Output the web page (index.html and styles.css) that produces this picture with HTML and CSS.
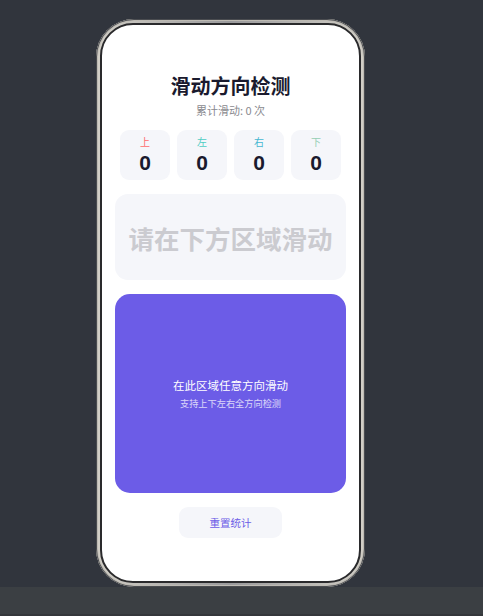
FILE: index.html
```html
<!DOCTYPE html>
<html>
<head>
  <title>滑动方向检测</title>
  <meta name="viewport" content="width=device-width, initial-scale=1.0" />
  <link rel="stylesheet" href="styles.css">
</head>
<body>
  <div class="stage">
    <div class="phone">
      <div class="screen">
        <h1 class="title">滑动方向检测</h1>
        <p class="subtitle">累计滑动: <span id="total">0</span> 次</p>

        <div class="stats">
          <div class="stat">
            <span class="stat-label up">上</span>
            <span class="stat-num" id="up">0</span>
          </div>
          <div class="stat">
            <span class="stat-label left">左</span>
            <span class="stat-num" id="left">0</span>
          </div>
          <div class="stat">
            <span class="stat-label right">右</span>
            <span class="stat-num" id="right">0</span>
          </div>
          <div class="stat">
            <span class="stat-label down">下</span>
            <span class="stat-num" id="down">0</span>
          </div>
        </div>

        <div class="display" id="display">请在下方区域滑动</div>

        <div class="swipe-area" id="swipeArea">
          <p class="swipe-main">在此区域任意方向滑动</p>
          <p class="swipe-sub">支持上下左右全方向检测</p>
        </div>

        <button class="reset" id="resetBtn">重置统计</button>
      </div>
    </div>
  </div>
  <div class="bottom-bar"></div>

  <script>
    const counts = { up: 0, down: 0, left: 0, right: 0 };
    const names = { up: "向上滑动", down: "向下滑动", left: "向左滑动", right: "向右滑动" };
    const area = document.getElementById("swipeArea");
    let startX = 0, startY = 0;

    function render() {
      for (const k in counts) document.getElementById(k).innerText = counts[k];
      document.getElementById("total").innerText =
        counts.up + counts.down + counts.left + counts.right;
    }

    area.addEventListener("pointerdown", function(e) {
      startX = e.clientX;
      startY = e.clientY;
    });

    area.addEventListener("pointerup", function(e) {
      const dx = e.clientX - startX;
      const dy = e.clientY - startY;
      if (Math.abs(dx) < 20 && Math.abs(dy) < 20) return;
      let dir;
      if (Math.abs(dx) > Math.abs(dy)) dir = dx > 0 ? "right" : "left";
      else dir = dy > 0 ? "down" : "up";
      counts[dir]++;
      document.getElementById("display").innerText = names[dir];
      render();
    });

    document.getElementById("resetBtn").addEventListener("click", function() {
      for (const k in counts) counts[k] = 0;
      document.getElementById("display").innerText = "请在下方区域滑动";
      render();
    });
  </script>
</body>
</html>
```

FILE: styles.css
```css
body {
  margin: 0;
  background-color: #31353d;
  font-family: "Noto Sans CJK SC", "Noto Sans", sans-serif;
}
.stage {
  height: 587px;
  padding: 19px 0 0 96px;
  box-sizing: border-box;
}
.phone {
  width: 269px;
  height: 568px;
  box-sizing: border-box;
  border-radius: 38px;
  padding: 4px;
  background: linear-gradient(90deg, #d2cfc7, #9a9a9c 50%, #d2cfc7);
  box-shadow: inset 0 0 0 1px #4a4c50, inset 0 0 0 2px #bdbab3;
}
.screen {
  height: 100%;
  box-sizing: border-box;
  border-radius: 33px;
  background-color: white;
  border: 2px solid #2a2a2c;
  padding: 47px 11px 0;
  display: flex;
  flex-direction: column;
  align-items: center;
}
.title {
  margin: 0;
  font-size: 20px;
  line-height: 28px;
  font-weight: bold;
  color: #1a1a2e;
}
.subtitle {
  margin: 2px 0 0;
  font-size: 11px;
  line-height: 16px;
  color: #8a8a8f;
}
.stats {
  margin-top: 12px;
  display: flex;
  gap: 7px;
}
.stat {
  width: 50px;
  height: 50px;
  box-sizing: border-box;
  padding-top: 5px;
  border-radius: 9px;
  background-color: #f5f6fa;
  display: flex;
  flex-direction: column;
  align-items: center;
}
.stat-label {
  font-size: 10px;
  line-height: 14px;
}
.stat-label.up { color: #ff6b6b; }
.stat-label.left { color: #4ecdc4; }
.stat-label.right { color: #45b7d1; }
.stat-label.down { color: #96ceb4; }
.stat-num {
  font-family: "Liberation Sans", Arial, sans-serif;
  font-size: 21px;
  line-height: 27px;
  font-weight: bold;
  color: #1a1a2e;
}
.display {
  margin-top: 14px;
  width: 231px;
  height: 86px;
  border-radius: 13px;
  background-color: #f5f6fa;
  display: flex;
  align-items: center;
  justify-content: center;
  font-size: 25.5px;
  font-weight: bold;
  color: #cbcbd0;
}
.swipe-area {
  margin-top: 14px;
  width: 231px;
  height: 199px;
  border-radius: 15px;
  background-color: #6c5ce7;
  display: flex;
  flex-direction: column;
  align-items: center;
  justify-content: center;
  color: white;
  user-select: none;
  touch-action: none;
}
.swipe-main {
  margin: 0;
  font-size: 11.5px;
  line-height: 16px;
}
.swipe-sub {
  margin: 3px 0 0;
  font-size: 9.2px;
  line-height: 14px;
  opacity: 0.75;
}
.reset {
  margin-top: 14px;
  width: 103px;
  height: 31px;
  border: none;
  border-radius: 9px;
  background-color: #f5f6fa;
  color: #6c5ce7;
  font-family: inherit;
  font-size: 10.5px;
  cursor: pointer;
}
.bottom-bar {
  height: 29px;
  background-color: #3b3f43;
  border-bottom: 2px solid #34373b;
  box-sizing: border-box;
}
```
